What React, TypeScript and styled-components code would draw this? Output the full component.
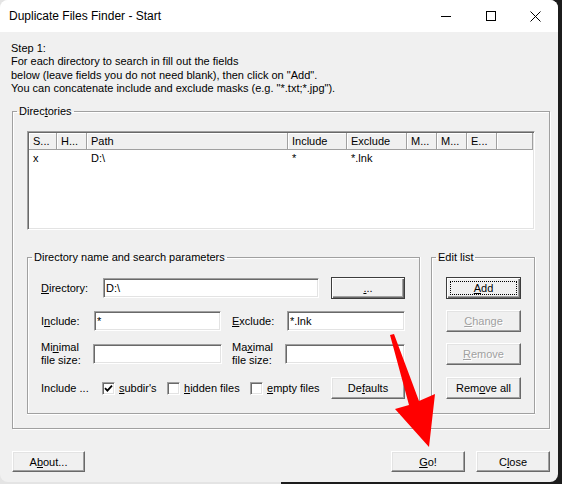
import React from 'react';
import styled, { createGlobalStyle, css } from 'styled-components';

const GlobalStyle = createGlobalStyle`
    html, body {
        margin: 0;
        padding: 0;
    }
    body {
        width: 562px;
        height: 484px;
        overflow: hidden;
        background: linear-gradient(90deg, #e4e4e4 50%, #1c1c1c 50%);
        font-family: "Liberation Sans", Arial, sans-serif;
        font-size: 11px;
        color: #000;
    }
`;

const columns = [
    { title: 'S...', width: 28 },
    { title: 'H...', width: 30 },
    { title: 'Path', width: 201 },
    { title: 'Include', width: 59 },
    { title: 'Exclude', width: 60 },
    { title: 'M...', width: 30 },
    { title: 'M...', width: 30 },
    { title: 'E...', width: 30 },
];

const rows = [['x', '', 'D:\\', '*', '*.lnk', '', '', '']];

const MinimizeIcon = () => (
    <svg width="10" height="10" viewBox="0 0 10 10">
        <path d="M0 5.5H10" stroke="#000" strokeWidth="1" />
    </svg>
);

const MaximizeIcon = () => (
    <svg width="10" height="10" viewBox="0 0 10 10">
        <rect x="0.5" y="0.5" width="9" height="9" fill="none" stroke="#000" strokeWidth="1" />
    </svg>
);

const CloseIcon = () => (
    <svg width="11" height="11" viewBox="0 0 11 11">
        <path d="M0.5 0.5L10.5 10.5M10.5 0.5L0.5 10.5" stroke="#000" strokeWidth="1" />
    </svg>
);

const CheckMark = () => (
    <svg width="9" height="9" viewBox="0 0 9 9">
        <path d="M1 4.2L3.4 6.6L8 1.6" fill="none" stroke="#000" strokeWidth="1.8" />
    </svg>
);

export default function App() {
    return (
        <>
            <GlobalStyle />
            <Window>
                <TitleBar>
                    <Title>Duplicate Files Finder - Start</Title>
                    <Control>
                        <MinimizeIcon />
                    </Control>
                    <Control>
                        <MaximizeIcon />
                    </Control>
                    <Control>
                        <CloseIcon />
                    </Control>
                </TitleBar>

                <Body>
                    <Intro>
                        Step 1:
                        <br />
                        For each directory to search in fill out the fields
                        <br />
                        below (leave fields you do not need blank), then click on "Add".
                        <br />
                        You can concatenate include and exclude masks (e.g. "*.txt;*.jpg").
                    </Intro>

                    <DirectoriesGroup>
                        <Legend $offset={-10}>
                            Direc<U>t</U>ories
                        </Legend>
                        <ListView>
                            <HeaderRow>
                                {columns.map((col, i) => (
                                    <HeadCell key={i} $w={col.width}>
                                        {col.title}
                                    </HeadCell>
                                ))}
                                <HeadCell />
                            </HeaderRow>
                            {rows.map((row, r) => (
                                <DataRow key={r}>
                                    {row.map((value, i) => (
                                        <DataCell key={i} $w={columns[i].width}>
                                            {value}
                                        </DataCell>
                                    ))}
                                </DataRow>
                            ))}
                        </ListView>

                        <LowerRow>
                            <InnerGroup $w={393} $pl={13} $pr={14}>
                                <Legend $offset={-9}>Directory name and search parameters</Legend>
                                <FormRow>
                                    <Label $w={62}>
                                        <U>D</U>irectory:
                                    </Label>
                                    <Field $w={216} defaultValue="D:\" readOnly />
                                    <Button $w={74} $default $ml={12}>
                                        <U>.</U>..
                                    </Button>
                                </FormRow>
                                <FormRow $mt={11}>
                                    <Label $w={53}>
                                        I<U>n</U>clude:
                                    </Label>
                                    <Field $w={127} defaultValue="*" readOnly />
                                    <Label $w={55} $ml={11}>
                                        <U>E</U>xclude:
                                    </Label>
                                    <Field $w={118} defaultValue="*.lnk" readOnly />
                                </FormRow>
                                <FormRow $mt={11}>
                                    <Label $w={52}>
                                        Mi<U>n</U>imal
                                        <br />
                                        file size:
                                    </Label>
                                    <Field $w={129} readOnly />
                                    <Label $w={53} $ml={10}>
                                        Ma<U>x</U>imal
                                        <br />
                                        file size:
                                    </Label>
                                    <Field $w={120} readOnly />
                                </FormRow>
                                <FormRow $mt={12}>
                                    <Label $w={61}>Include ...</Label>
                                    <CheckItem $w={65}>
                                        <CheckBox>
                                            <CheckMark />
                                        </CheckBox>
                                        <U>s</U>ubdir's
                                    </CheckItem>
                                    <CheckItem $w={83}>
                                        <CheckBox />
                                        <U>h</U>idden files
                                    </CheckItem>
                                    <CheckItem>
                                        <CheckBox />
                                        <U>e</U>mpty files
                                    </CheckItem>
                                    <Button $w={74} $ml="auto">
                                        De<U>f</U>aults
                                    </Button>
                                </FormRow>
                            </InnerGroup>

                            <InnerGroup $w={104} $pl={14} $pr={13}>
                                <Legend $offset={-10}>Edit list</Legend>
                                <FormRow>
                                    <Button $w={75} $default $focus>
                                        <U>A</U>dd
                                    </Button>
                                </FormRow>
                                <FormRow $mt={11}>
                                    <Button $w={75} disabled>
                                        <U>C</U>hange
                                    </Button>
                                </FormRow>
                                <FormRow $mt={11}>
                                    <Button $w={75} disabled>
                                        <U>R</U>emove
                                    </Button>
                                </FormRow>
                                <FormRow $mt={12}>
                                    <Button $w={75}>
                                        Rem<U>o</U>ve all
                                    </Button>
                                </FormRow>
                            </InnerGroup>
                        </LowerRow>
                    </DirectoriesGroup>

                    <BottomBar>
                        <Button $w={73} $h={21}>
                            A<U>b</U>out...
                        </Button>
                        <Button $w={74} $h={21} $ml="auto">
                            <U>G</U>o!
                        </Button>
                        <Button $w={74} $h={21} $ml={11}>
                            C<U>l</U>ose
                        </Button>
                    </BottomBar>
                </Body>

                <Arrow width="558" height="482" viewBox="0 0 558 482">
                    <polygon
                        points="390,335 394,334 419,401 435,394 429,447 395,409 409,405"
                        fill="#ff0000"
                    />
                </Arrow>
            </Window>
        </>
    );
}

const etched = css`
    border: 1px solid #a0a0a0;
    box-shadow: inset 1px 1px 0 #fff, 1px 1px 0 #fff;
`;

const sunken = css`
    border: 1px solid;
    border-color: #a0a0a0 #fff #fff #a0a0a0;
    box-shadow: inset 1px 1px 0 #696969, inset -1px -1px 0 #e3e3e3;
`;

const Window = styled.div`
    position: relative;
    width: 558px;
    height: 482px;
    border-radius: 8px;
    overflow: hidden;
    background-color: #f0f0f0;
    display: flex;
    flex-direction: column;
`;

const TitleBar = styled.div`
    height: 32px;
    flex: none;
    background-color: #fff;
    display: flex;
    align-items: center;
    padding-left: 9px;
    font-size: 12px;
`;

const Title = styled.div`
    flex: 1;
`;

const Control = styled.div`
    width: 45px;
    height: 32px;
    display: flex;
    align-items: center;
    justify-content: center;
`;

const Body = styled.div`
    flex: 1;
    display: flex;
    flex-direction: column;
    padding: 10px 8px 10px 10px;
`;

const Intro = styled.div`
    line-height: 13.33px;
    margin-left: 1px;
`;

const U = styled.span`
    text-decoration: underline;
    text-underline-offset: 1px;
`;

const DirectoriesGroup = styled.fieldset`
    margin: 10px 0 0 2px;
    padding: 0 14px 14px 14px;
    min-width: 0;
    ${etched};
`;

const Legend = styled.legend<{ $offset: number }>`
    margin-left: ${(p) => p.$offset}px;
    padding: 0 2px;
    line-height: 13px;
    font-size: 11px;
`;

const ListView = styled.div`
    margin-top: 13px;
    height: 99px;
    box-sizing: border-box;
    padding: 1px;
    background-color: #fff;
    ${sunken};
`;

const HeaderRow = styled.div`
    display: flex;
    height: 17px;
    background-color: #f0f0f0;
`;

const HeadCell = styled.div<{ $w?: number }>`
    box-sizing: border-box;
    ${(p) => (p.$w ? `width: ${p.$w}px; flex: none;` : 'flex: 1;')}
    height: 17px;
    line-height: 16px;
    padding-left: 4px;
    border-right: 1px solid #a0a0a0;
    border-bottom: 1px solid #a0a0a0;
    box-shadow: inset 1px 1px 0 #fff;
    white-space: nowrap;
    overflow: hidden;
`;

const DataRow = styled.div`
    display: flex;
    height: 17px;
    line-height: 17px;
`;

const DataCell = styled.div<{ $w: number }>`
    box-sizing: border-box;
    width: ${(p) => p.$w}px;
    flex: none;
    padding-left: 4px;
    white-space: nowrap;
`;

const LowerRow = styled.div`
    display: flex;
    gap: 11px;
    margin-top: 21px;
    border-bottom: 1px solid #a0a0a0;
    box-shadow: 0 1px 0 #fff;
`;

const InnerGroup = styled.fieldset<{ $w: number; $pl: number; $pr: number }>`
    box-sizing: border-box;
    width: ${(p) => p.$w}px;
    flex: none;
    margin: 0;
    min-width: 0;
    padding: 13px ${(p) => p.$pr}px 14px ${(p) => p.$pl}px;
    border: 1px solid #a0a0a0;
    border-bottom: none;
    box-shadow: inset 1px 1px 0 #fff, 1px 0 0 #fff;
`;

const FormRow = styled.div<{ $mt?: number }>`
    display: flex;
    align-items: center;
    height: 22px;
    margin-top: ${(p) => p.$mt ?? 0}px;
`;

const Label = styled.label<{ $w: number; $ml?: number }>`
    width: ${(p) => p.$w}px;
    flex: none;
    margin-left: ${(p) => p.$ml ?? 0}px;
    line-height: 13px;
    white-space: nowrap;
`;

const Field = styled.input<{ $w: number }>`
    box-sizing: border-box;
    width: ${(p) => p.$w}px;
    height: 20px;
    flex: none;
    padding: 0 0 0 2px;
    margin: 0;
    font-family: inherit;
    font-size: 11px;
    color: #000;
    background-color: #fff;
    outline: none;
    ${sunken};
`;

const Button = styled.button<{ $w: number; $h?: number; $ml?: number | 'auto'; $default?: boolean; $focus?: boolean }>`
    position: relative;
    box-sizing: border-box;
    width: ${(p) => p.$w}px;
    height: ${(p) => p.$h ?? 22}px;
    flex: none;
    margin: 0 0 0 ${(p) => (p.$ml === 'auto' ? 'auto' : `${p.$ml ?? 0}px`)};
    padding: 0;
    font-family: inherit;
    font-size: 11px;
    color: #000;
    background-color: #f0f0f0;
    border: 1px solid;
    border-color: #fff #696969 #696969 #fff;
    box-shadow: inset -1px -1px 0 #a0a0a0, inset 1px 1px 0 #e3e3e3;
    ${(p) =>
        p.$default &&
        css`
            border-color: #3c3c3c;
            box-shadow: inset 1px 1px 0 #fff, inset -1px -1px 0 #696969, inset -2px -2px 0 #a0a0a0;
        `}
    ${(p) =>
        p.$focus &&
        css`
            &::after {
                content: '';
                position: absolute;
                inset: 3px 3px 3px 3px;
                border: 1px dotted #000;
            }
        `}
    &:disabled {
        color: #a0a0a0;
        text-shadow: 1px 1px 0 #fff;
    }
`;

const CheckItem = styled.div<{ $w?: number }>`
    display: flex;
    align-items: center;
    width: ${(p) => (p.$w ? `${p.$w}px` : 'auto')};
    flex: none;
    white-space: nowrap;
`;

const CheckBox = styled.span`
    box-sizing: border-box;
    width: 13px;
    height: 13px;
    margin-right: 4px;
    display: flex;
    align-items: center;
    justify-content: center;
    background-color: #fff;
    ${sunken};
`;

const BottomBar = styled.div`
    display: flex;
    margin: auto 0 0 2px;
`;

const Arrow = styled.svg`
    position: absolute;
    left: 0;
    top: 0;
    pointer-events: none;
`;
